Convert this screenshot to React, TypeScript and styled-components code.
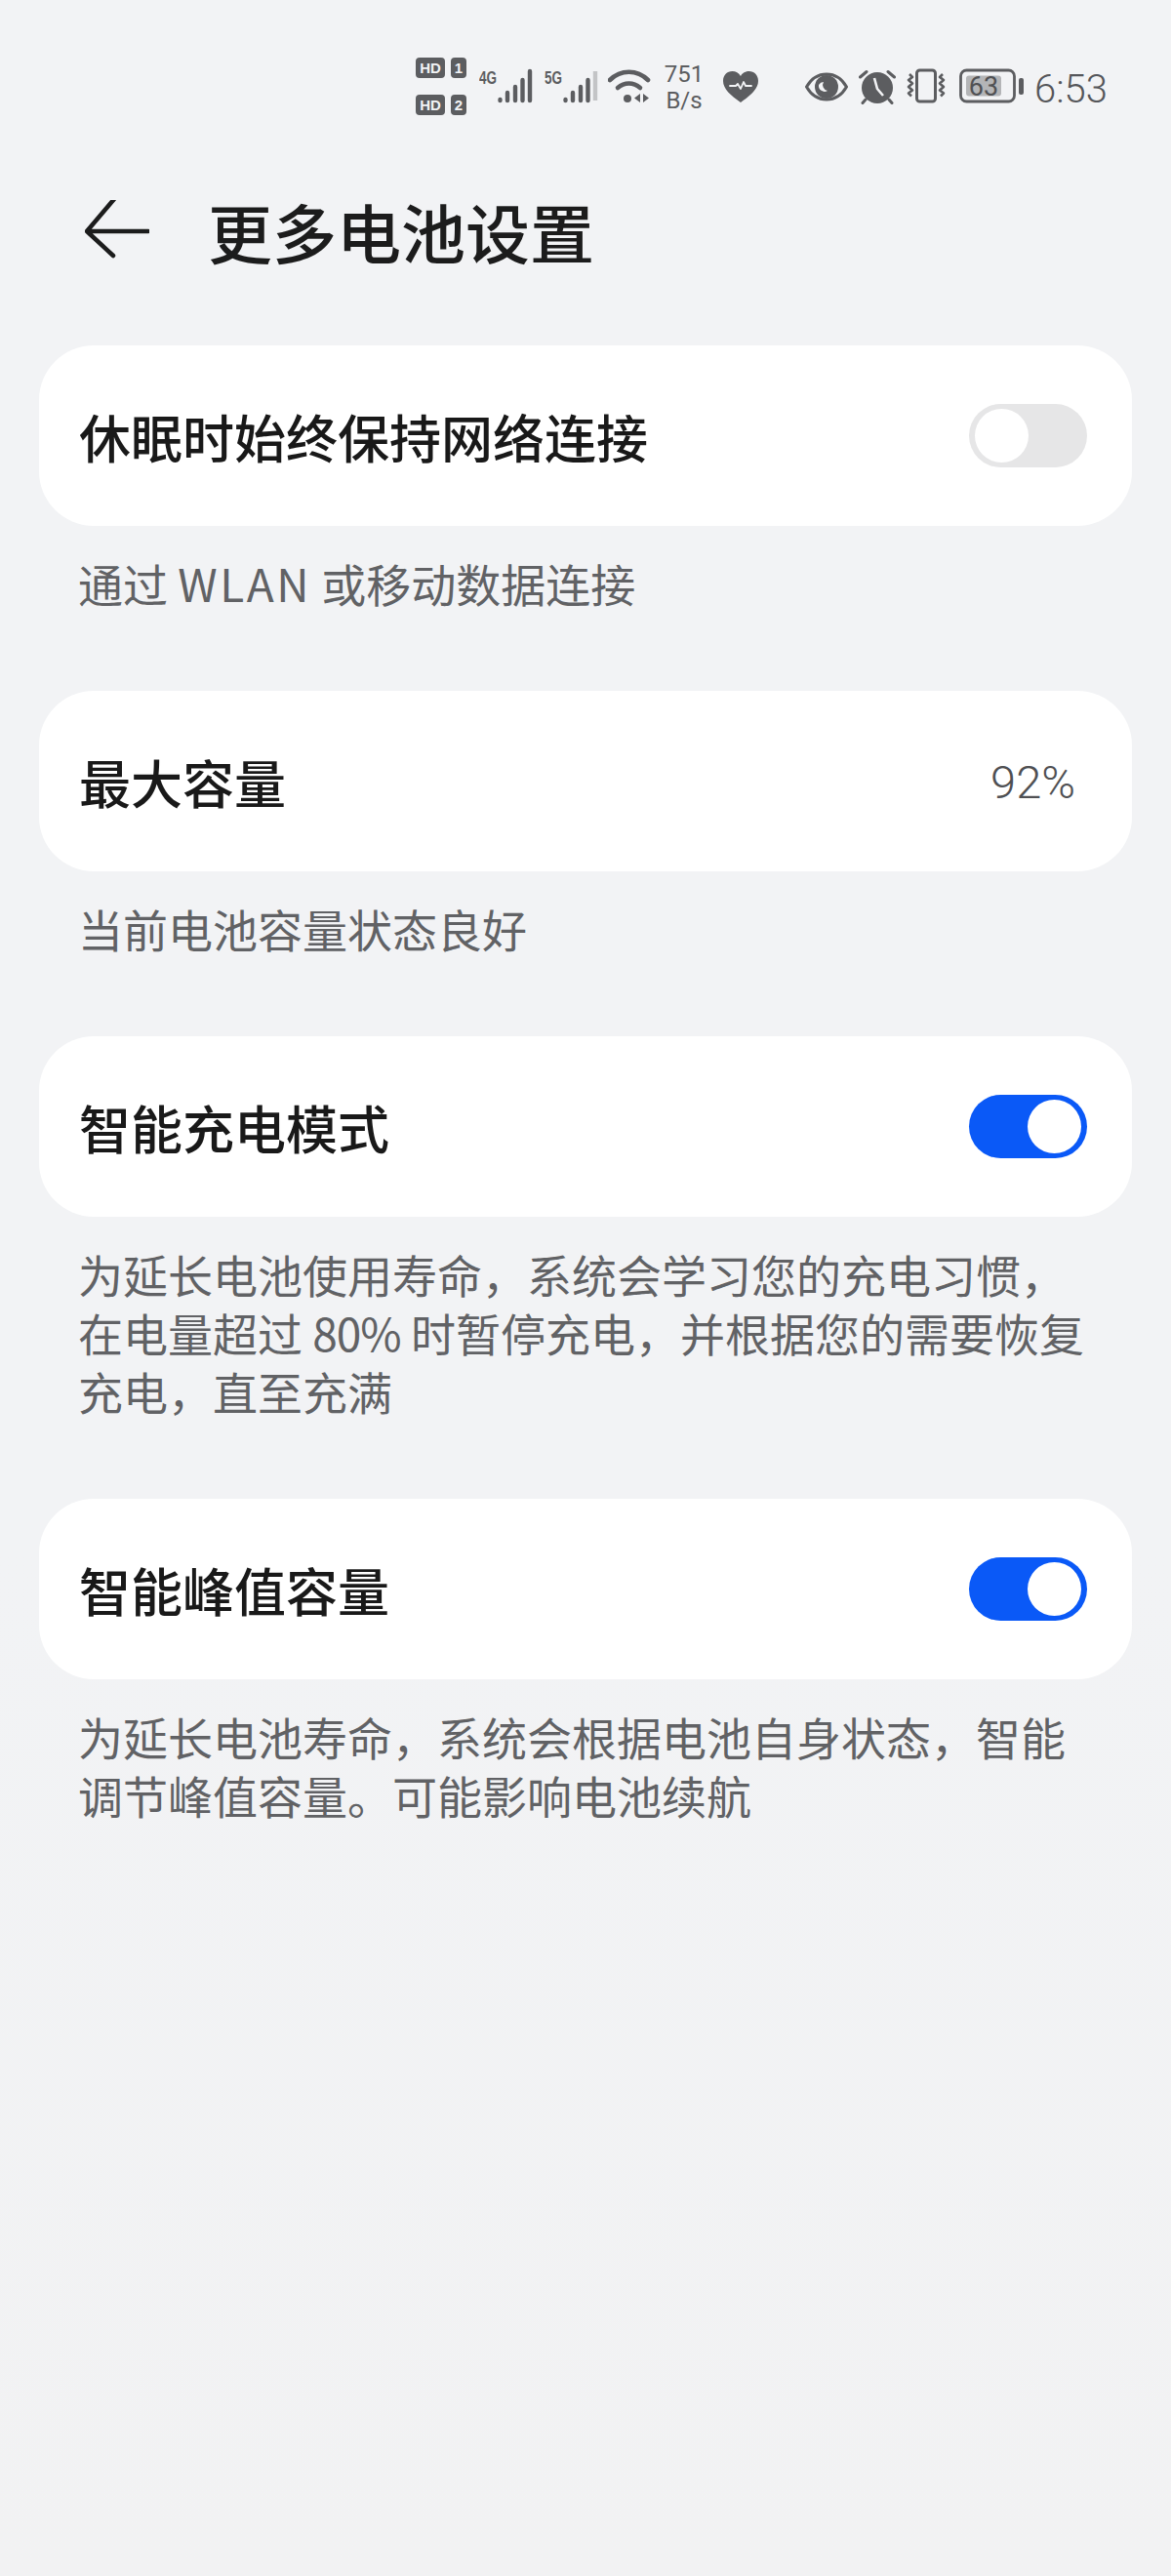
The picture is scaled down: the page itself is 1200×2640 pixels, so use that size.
import React from "react";
import styled, { createGlobalStyle } from "styled-components";

const ICON = "#5c5d60";
const CJK = `"Noto Sans CJK SC", "Noto Sans", sans-serif`;

const GlobalStyle = createGlobalStyle`
  html, body {
    margin: 0;
    padding: 0;
    background: #f2f3f5;
  }
  * {
    box-sizing: border-box;
  }
`;

const Screen = styled.div`
  width: 1200px;
  height: 2640px;
  overflow: hidden;
  background: linear-gradient(#f2f3f5, #f2f3f5 60%, #f2f2f3);
  font-family: ${CJK};
`;

const StatusBar = styled.div`
  height: 177px;
  padding: 59px 65px 0 426px;
  display: flex;
  align-items: flex-start;
  color: ${ICON};
`;

const SimColumn = styled.div`
  width: 52px;
  height: 59px;
  margin-right: 13px;
  display: flex;
  flex-direction: column;
  justify-content: space-between;
`;

const SimRow = styled.div`
  display: flex;
  justify-content: space-between;
`;

const SimChip = styled.span<{ $wide?: boolean }>`
  width: ${(p) => (p.$wide ? "30px" : "16px")};
  height: 21px;
  border-radius: 4px;
  background: ${ICON};
  color: #f2f3f5;
  font: 700 15px/21px "Liberation Sans", sans-serif;
  text-align: center;
`;

const IconSlot = styled.div<{ $w: number; $ml: number; $mt: number }>`
  flex: none;
  width: ${(p) => p.$w}px;
  margin-left: ${(p) => p.$ml}px;
  margin-top: ${(p) => p.$mt}px;
  display: flex;
  svg {
    display: block;
  }
`;

const NetSpeed = styled.div`
  width: 42px;
  margin-left: 13px;
  margin-top: 4px;
  font: 400 24px/27px Roboto, sans-serif;
  text-align: center;
  white-space: nowrap;
`;

const Clock = styled.div`
  margin-left: auto;
  margin-top: 10px;
  font: 300 40px/46px Roboto, sans-serif;
  color: #55565a;
`;

const Header = styled.header`
  height: 177px;
  padding: 0 0 60px 87px;
  display: flex;
  align-items: center;
  color: #1a1a1a;
`;

const BackButton = styled.div`
  width: 66px;
  height: 62px;
  margin-right: 60px;
`;

const Title = styled.h1`
  margin: 0;
  font: 500 66px/80px ${CJK};
  color: #1c1c1c;
`;

const Sections = styled.main`
  padding: 0 40px;
  display: flex;
  flex-direction: column;
`;

const Section = styled.section`
  margin-bottom: 81px;
`;

const Card = styled.div`
  height: 185px;
  padding: 0 46px 0 41px;
  border-radius: 56px;
  background: #ffffff;
  display: flex;
  align-items: center;
  justify-content: space-between;
`;

const RowTitle = styled.div`
  font: 500 53px/70px ${CJK};
  color: #191919;
  white-space: nowrap;
`;

const Value = styled.div`
  margin: 3px 12px 0 0;
  font: 300 47px/52px Roboto, sans-serif;
  color: #4f5053;
`;

const Note = styled.p`
  margin: 28px 0 0;
  padding: 0 40px;
  font: 400 46px/60px ${CJK};
  color: #616265;
  white-space: nowrap;
`;

const Latin = styled.span<{ $track: number }>`
  letter-spacing: ${(p) => p.$track}px;
`;

const Track = styled.div<{ $on?: boolean }>`
  width: 121px;
  height: 65px;
  margin-top: -1px;
  padding: 5px 6px;
  border-radius: 33px;
  background: ${(p) => (p.$on ? "#0a59f7" : "#e6e6e7")};
  display: flex;
  justify-content: ${(p) => (p.$on ? "flex-end" : "flex-start")};
`;

const Knob = styled.div`
  width: 55px;
  height: 55px;
  border-radius: 50%;
  background: #ffffff;
`;

const SignalIcon = ({ label, dimLast }: { label: string; dimLast?: boolean }) => (
  <svg width="55" height="36" viewBox="0 0 55 36">
    <text x="0" y="16" fontFamily="Liberation Sans" fontWeight="700" fontSize="19" textLength="18" lengthAdjust="spacingAndGlyphs" fill={ICON}>
      {label}
    </text>
    <g stroke={ICON} strokeWidth="4.400" strokeLinecap="round">
      <path d="M21.500 32v1" />
      <path d="M29 25v8" />
      <path d="M37 19v14" />
      <path d="M44.500 12v21" />
      <path d="M52 3v30" stroke={dimLast ? "#c3c4c6" : ICON} strokeLinecap={dimLast ? "butt" : "round"} />
    </g>
  </svg>
);

const WifiIcon = () => (
  <svg width="44" height="36" viewBox="0 0 44 36">
    <g fill="none" stroke={ICON} strokeWidth="4.600" strokeLinecap="round">
      <path d="M2 12C13 1 30 1 41 12" />
      <path d="M10 20c7-6 16-6 23 0" />
    </g>
    <circle cx="20" cy="31" r="4" fill={ICON} />
    <path d="M33 26v9l-6-4.500zM36 26v9l6-4.500z" fill={ICON} />
  </svg>
);

const HeartIcon = () => (
  <svg width="36" height="32" viewBox="0 0 36 32">
    <path d="M18 32C8 25 0 18 0 10 0 4 4 0 9.500 0 13 0 16 1.500 18 5 20 1.500 23 0 26.500 0 32 0 36 4 36 10c0 8-8 15-18 22z" fill={ICON} />
    <path d="M7 15h6l2-2 3 5 3-7 2 4h6" fill="none" stroke="#f2f3f5" strokeWidth="1.800" strokeLinejoin="round" strokeLinecap="round" />
  </svg>
);

const EyeIcon = () => (
  <svg width="44" height="30" viewBox="0 0 44 30">
    <path d="M1.500 15C7 5.500 14 2 22 2s15 3.500 20.500 13C37 24.500 30 28 22 28S7 24.500 1.500 15z" fill="#f2f3f5" stroke={ICON} strokeWidth="3" strokeLinejoin="round" />
    <circle cx="22" cy="15" r="12" fill={ICON} />
    <path d="M14 13a6 6 0 0 0 9 6 6 6 0 0 1-4-9 6 6 0 0 0-5 3z" fill="#f2f3f5" />
  </svg>
);

const AlarmIcon = () => (
  <svg width="38" height="36" viewBox="0 0 38 36">
    <circle cx="19" cy="19" r="16" fill={ICON} />
    <path d="M16 9l3 11 6 7" fill="none" stroke="#f2f3f5" strokeWidth="2.600" strokeLinejoin="round" />
    <path d="M1.500 8L8 2.500M36.500 8L30 2.500M7 31l-3 3.500M31 31l3 3.500" fill="none" stroke={ICON} strokeWidth="3" strokeLinecap="round" />
  </svg>
);

const VibrateIcon = () => (
  <svg width="42" height="36" viewBox="0 0 42 36">
    <rect x="11.500" y="2" width="19" height="32" rx="3" fill="none" stroke={ICON} strokeWidth="3" />
    <path d="M4 6l3 3-4 3 4 3.500-4 3.500 4 3.500-4 3 3 3" fill="none" stroke={ICON} strokeWidth="2.600" strokeLinejoin="round" />
    <path d="M38 6l-3 3 4 3-4 3.500 4 3.500-4 3.500 4 3-3 3" fill="none" stroke={ICON} strokeWidth="2.600" strokeLinejoin="round" />
  </svg>
);

const BatteryIcon = () => (
  <svg width="67" height="36" viewBox="0 0 67 36">
    <rect x="1.500" y="2" width="55" height="32" rx="6" fill="none" stroke={ICON} strokeWidth="2.800" />
    <rect x="7" y="7.500" width="36" height="21" rx="3" fill="#b4b5b7" />
    <rect x="61" y="10" width="5" height="17" rx="2" fill={ICON} />
    <text x="25" y="28" textAnchor="middle" fontFamily="Roboto" fontSize="27" fill="#505154">
      63
    </text>
  </svg>
);

const BackArrow = () => (
  <svg width="66" height="62" viewBox="0 0 66 62">
    <path d="M30 2L2 35l27 25M3 35h62" transform="translate(0 -3)" fill="none" stroke="#1c1c1c" strokeWidth="4.500" strokeLinecap="round" strokeLinejoin="round" />
  </svg>
);

const Toggle = ({ on }: { on?: boolean }) => (
  <Track $on={on}>
    <Knob />
  </Track>
);

export default function App() {
  return (
    <Screen>
      <GlobalStyle />
      <StatusBar>
        <SimColumn>
          <SimRow>
            <SimChip $wide>HD</SimChip>
            <SimChip>1</SimChip>
          </SimRow>
          <SimRow>
            <SimChip $wide>HD</SimChip>
            <SimChip>2</SimChip>
          </SimRow>
        </SimColumn>
        <IconSlot $w={55} $ml={0} $mt={11}>
          <SignalIcon label="4G" />
        </IconSlot>
        <IconSlot $w={55} $ml={12} $mt={11}>
          <SignalIcon label="5G" dimLast />
        </IconSlot>
        <IconSlot $w={44} $ml={10} $mt={11}>
          <WifiIcon />
        </IconSlot>
        <NetSpeed>
          751
          <br />
          B/s
        </NetSpeed>
        <IconSlot $w={36} $ml={19} $mt={14}>
          <HeartIcon />
        </IconSlot>
        <IconSlot $w={44} $ml={48} $mt={15}>
          <EyeIcon />
        </IconSlot>
        <IconSlot $w={38} $ml={11} $mt={12}>
          <AlarmIcon />
        </IconSlot>
        <IconSlot $w={42} $ml={10} $mt={11}>
          <VibrateIcon />
        </IconSlot>
        <IconSlot $w={67} $ml={13} $mt={11}>
          <BatteryIcon />
        </IconSlot>
        <Clock>6:53</Clock>
      </StatusBar>

      <Header>
        <BackButton>
          <BackArrow />
        </BackButton>
        <Title>更多电池设置</Title>
      </Header>

      <Sections>
        <Section>
          <Card>
            <RowTitle>休眠时始终保持网络连接</RowTitle>
            <Toggle />
          </Card>
          <Note>
            通过 <Latin $track={2.5}>WLAN</Latin> 或移动数据连接
          </Note>
        </Section>
        <Section>
          <Card>
            <RowTitle>最大容量</RowTitle>
            <Value>92%</Value>
          </Card>
          <Note>当前电池容量状态良好</Note>
        </Section>
        <Section>
          <Card>
            <RowTitle>智能充电模式</RowTitle>
            <Toggle on />
          </Card>
          <Note>
            为延长电池使用寿命，系统会学习您的充电习惯，
            <br />
            在电量超过 <Latin $track={-1}>80%</Latin> 时暂停充电，并根据您的需要恢复
            <br />
            充电，直至充满
          </Note>
        </Section>
        <Section>
          <Card>
            <RowTitle>智能峰值容量</RowTitle>
            <Toggle on />
          </Card>
          <Note>
            为延长电池寿命，系统会根据电池自身状态，智能
            <br />
            调节峰值容量。可能影响电池续航
          </Note>
        </Section>
      </Sections>
    </Screen>
  );
}
